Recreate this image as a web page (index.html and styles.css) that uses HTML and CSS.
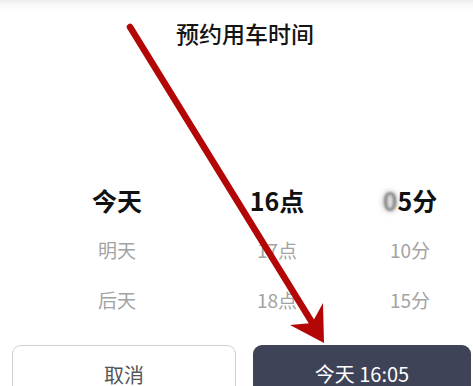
FILE: index.html
```html
<!DOCTYPE html>
<html lang="zh-CN">
<head>
<meta charset="utf-8">
<title>预约用车时间</title>
<link rel="stylesheet" href="styles.css">
</head>
<body>
<div class="sheet">
  <h1 class="title">预约用车时间</h1>
  <div class="picker">
    <div class="col c1">
      <div class="item sel">今天</div>
      <div class="item">明天</div>
      <div class="item">后天</div>
    </div>
    <div class="col c2">
      <div class="item sel">16点</div>
      <div class="item">17点</div>
      <div class="item">18点</div>
    </div>
    <div class="col c3">
      <div class="item sel"><span class="smudge">0</span>5分</div>
      <div class="item">10分</div>
      <div class="item">15分</div>
    </div>
  </div>
  <div class="actions">
    <button class="btn cancel">取消</button>
    <button class="btn confirm">今天 16:05</button>
  </div>
</div>
<svg class="arrow" width="473" height="386" viewBox="0 0 473 386">
  <line x1="130" y1="27" x2="313" y2="324" stroke="#b30606" stroke-width="6.5" stroke-linecap="round"/>
  <polygon points="324,343 290,325 312,323 323,303" fill="#b30606"/>
</svg>
</body>
</html>
```

FILE: styles.css
```css
html, body {
  margin: 0;
  padding: 0;
  height: 100%;
  overflow: hidden;
}
body {
  background: linear-gradient(to bottom, #ececec 0px, #f7f7f7 4px, #ffffff 10px);
  font-family: "Noto Sans CJK SC", "Noto Sans", sans-serif;
  color: #111;
  position: relative;
}
.sheet {
  display: flex;
  flex-direction: column;
}
.title {
  margin: 18px 0 0 0;
  font-size: 23px;
  line-height: 30px;
  font-weight: 500;
  text-align: center;
  padding-left: 17px;
  color: #151515;
}
.picker {
  margin-top: 127px;
  display: grid;
  grid-template-columns: 120px 200px 66px;
  padding-left: 57px;
}
.col {
  display: flex;
  flex-direction: column;
  align-items: center;
}
.item {
  height: 50px;
  line-height: 50px;
  font-size: 19px;
  color: #a3a3a3;
  white-space: nowrap;
}
.item.sel {
  font-size: 25px;
  font-weight: 700;
  color: #111;
}
.smudge {
  color: rgba(110, 110, 110, 0.75);
  filter: blur(1.2px);
  text-shadow: 0 0 6px rgba(0, 0, 0, 0.35);
}
.actions {
  margin-top: 20px;
  display: flex;
  gap: 17px;
  padding: 0 2px 0 12px;
}
.btn {
  box-sizing: border-box;
  height: 41px;
  border-radius: 9px 9px 0 0;
  font-family: "Noto Sans CJK SC", "Noto Sans", sans-serif;
  font-size: 20px;
  line-height: 21px;
  padding: 18px 0 0 0;
  display: flex;
  align-items: flex-start;
  justify-content: center;
}
.cancel {
  width: 224px;
  background: #fff;
  border: 1px solid #cfcfcf;
  border-bottom: none;
  color: #555;
}
.confirm {
  flex: 1;
  background: #3e4358;
  border: none;
  color: #fff;
}
.arrow {
  position: absolute;
  left: 0;
  top: 0;
  pointer-events: none;
}
```
